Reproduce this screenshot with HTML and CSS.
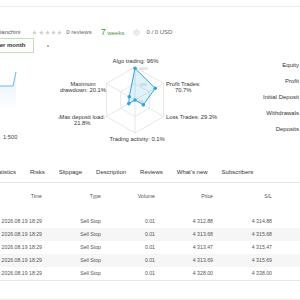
FILE: index.html
```html
<!DOCTYPE html>
<html lang="en">
<head>
  <meta charset="UTF-8">
  <meta name="viewport" content="width=device-width, initial-scale=1.0">
  <title>Signal Bianchini</title>
  <link rel="stylesheet" href="styles.css">
</head>
<body>
  <div class="topbar"></div>

  <div class="author-row">
    <span class="author">Bianchini</span>
    <span class="stars">
      <svg class="star" viewBox="0 0 10 10"><path d="M5 .5 6.3 3.6 9.6 3.9 7.1 6.1 7.9 9.4 5 7.7 2.1 9.4 2.9 6.1.4 3.9 3.7 3.6Z"/></svg>
      <svg class="star" viewBox="0 0 10 10"><path d="M5 .5 6.3 3.6 9.6 3.9 7.1 6.1 7.9 9.4 5 7.7 2.1 9.4 2.9 6.1.4 3.9 3.7 3.6Z"/></svg>
      <svg class="star" viewBox="0 0 10 10"><path d="M5 .5 6.3 3.6 9.6 3.9 7.1 6.1 7.9 9.4 5 7.7 2.1 9.4 2.9 6.1.4 3.9 3.7 3.6Z"/></svg>
      <svg class="star" viewBox="0 0 10 10"><path d="M5 .5 6.3 3.6 9.6 3.9 7.1 6.1 7.9 9.4 5 7.7 2.1 9.4 2.9 6.1.4 3.9 3.7 3.6Z"/></svg>
      <svg class="star" viewBox="0 0 10 10"><path d="M5 .5 6.3 3.6 9.6 3.9 7.1 6.1 7.9 9.4 5 7.7 2.1 9.4 2.9 6.1.4 3.9 3.7 3.6Z"/></svg>
    </span>
    <span class="reviews">0 reviews</span>
    <span class="weeks"><b>7</b> weeks</span>
    <svg class="coin" viewBox="0 0 14 14">
      <circle cx="7" cy="7" r="5.6" fill="none" stroke="#c6c6c6" stroke-width="2" stroke-dasharray="2 1.5"/>
      <circle cx="7" cy="7" r="2.6" fill="none" stroke="#c6c6c6" stroke-width="1.3"/>
    </svg>
    <span class="funds">0 / 0 USD</span>
  </div>

  <div class="plan-row">
    <div class="plan-btn">per month</div>
    <span class="plan-dot"></span>
  </div>

  <div class="overview">
    <div class="growth">
      <svg class="growth-chart" width="58" height="62">
        <defs>
          <linearGradient id="growthFill" x1="0" y1="0" x2="0" y2="1">
            <stop offset="0" stop-color="#5aaee8" stop-opacity="0.16"/>
            <stop offset="1" stop-color="#5aaee8" stop-opacity="0"/>
          </linearGradient>
        </defs>
        <path d="M0 31 L13 31 L16 17 L16 56 L0 56 Z" fill="url(#growthFill)"/>
        <polyline points="0,31 13,31 16,17" fill="none" stroke="#5aaee8" stroke-width="0.9"/>
        <circle cx="59" cy="63" r="0.8" fill="#9a9a9a"/>
      </svg>
      <div class="leverage">1:500</div>
    </div>

    <div class="radar">
      <svg width="162" height="90">
        <g fill="none" stroke="#dcdcdc" stroke-width="0.7">
          <polygon points="77,12 105.58,28.5 105.58,61.5 77,78 48.42,61.5 48.42,28.5"/>
          <polygon points="77,28.5 91.29,36.75 91.29,53.25 77,61.5 62.71,53.25 62.71,36.75"/>
          <line x1="77" y1="45" x2="77" y2="12"/>
          <line x1="77" y1="45" x2="105.58" y2="28.5"/>
          <line x1="77" y1="45" x2="105.58" y2="61.5"/>
          <line x1="77" y1="45" x2="77" y2="78"/>
          <line x1="77" y1="45" x2="48.42" y2="61.5"/>
          <line x1="77" y1="45" x2="48.42" y2="28.5"/>
        </g>
        <g class="radar-scale">
          <text x="81" y="14.5">100%</text>
          <text x="82" y="30.5">50%</text>
          <text x="80" y="47.5">0%</text>
        </g>
        <polygon points="77,13.32 97.21,33.33 85.37,49.83 77,45.03 70.77,48.6 71.26,41.68"
                 fill="rgba(41,168,224,0.15)" stroke="#29a8e0" stroke-width="1"/>
        <g fill="#29a8e0">
          <circle cx="77" cy="13.32" r="1.8"/>
          <circle cx="97.21" cy="33.33" r="1.8"/>
          <circle cx="85.37" cy="49.83" r="1.8"/>
          <circle cx="77" cy="45.03" r="1.8"/>
          <circle cx="70.77" cy="48.6" r="1.8"/>
          <circle cx="71.26" cy="41.68" r="1.8"/>
        </g>
      </svg>
      <div class="radar-label algo">Algo trading: 96%</div>
      <div class="radar-label profit">Profit Trades:<br>70.7%</div>
      <div class="radar-label loss">Loss Trades: 29.3%</div>
      <div class="radar-label activity">Trading activity: 0.1%</div>
      <div class="radar-label maxdep">Max deposit load:<br>21.8%</div>
      <div class="radar-label maxdd">Maximum<br>drawdown: 20.1%</div>
    </div>

    <div class="stats">
      <div>Equity</div>
      <div>Profit</div>
      <div>Initial Deposit</div>
      <div>Withdrawals</div>
      <div>Deposits</div>
    </div>
  </div>

  <nav class="tabs">
    <a href="#" class="tab first">Statistics</a>
    <a href="#" class="tab">Risks</a>
    <a href="#" class="tab">Slippage</a>
    <a href="#" class="tab">Description</a>
    <a href="#" class="tab">Reviews</a>
    <a href="#" class="tab">What's new</a>
    <a href="#" class="tab">Subscribers</a>
  </nav>

  <table class="orders">
    <thead>
      <tr>
        <th class="col-time">Time</th>
        <th class="col-type">Type</th>
        <th class="col-volume">Volume</th>
        <th class="col-price">Price</th>
        <th class="col-sl">S/L</th>
        <th class="col-rest"></th>
      </tr>
    </thead>
    <tbody>
      <tr><td>2026.08.19 18:29</td><td>Sell Stop</td><td>0.01</td><td>4 312.88</td><td>4 314.88</td><td></td></tr>
      <tr><td>2026.08.19 18:29</td><td>Sell Stop</td><td>0.01</td><td>4 313.68</td><td>4 315.68</td><td></td></tr>
      <tr><td>2026.08.19 18:29</td><td>Sell Stop</td><td>0.01</td><td>4 313.47</td><td>4 315.47</td><td></td></tr>
      <tr><td>2026.08.19 18:29</td><td>Sell Stop</td><td>0.01</td><td>4 313.69</td><td>4 315.69</td><td></td></tr>
      <tr><td>2026.08.19 18:29</td><td>Sell Stop</td><td>0.01</td><td>4 328.00</td><td>4 338.00</td><td></td></tr>
    </tbody>
  </table>

  <div class="footer-line"></div>
</body>
</html>
```

FILE: styles.css
```css
* {
  margin: 0;
  padding: 0;
  box-sizing: border-box;
}

body {
  font-family: "Liberation Sans", Arial, sans-serif;
  font-size: 6px;
  color: #333;
  background-color: #fff;
  width: 300px;
  height: 300px;
  overflow: hidden;
}

.topbar {
  height: 7px;
  border-bottom: 1px solid #ececec;
}

/* author line */
.author-row {
  display: flex;
  align-items: center;
  height: 10px;
  margin-top: 20px;
  white-space: nowrap;
}

.author {
  margin-left: -4px;
  color: #555;
}

.stars {
  display: flex;
  gap: 1.25px;
  margin-left: 12px;
}

.star {
  width: 5px;
  height: 5px;
  fill: #cfcfcf;
}

.reviews {
  margin-left: 4px;
  color: #666;
}

.weeks {
  margin-left: 9px;
  color: #4c9a3c;
}

.weeks b {
  font-size: 9px;
  font-weight: normal;
}

.coin {
  width: 7px;
  height: 7px;
  margin-left: 9px;
}

.funds {
  margin-left: 6px;
  color: #666;
}

/* subscription button */
.plan-row {
  display: flex;
  align-items: center;
  margin-top: 1px;
}

.plan-btn {
  height: 15px;
  line-height: 13px;
  margin-left: -13px;
  padding: 0 8px;
  border: 1px solid #c3dfb5;
  font-weight: bold;
  color: #333;
  white-space: nowrap;
}

.plan-dot {
  width: 2px;
  height: 2px;
  margin-left: 13px;
  border-radius: 50%;
  background-color: #999;
}

/* overview: growth, radar, stats */
.overview {
  display: flex;
  height: 90px;
  margin-top: 2px;
}

.growth {
  width: 58px;
  flex-shrink: 0;
}

.growth-chart {
  display: block;
  overflow: visible;
}

.leverage {
  margin-top: 15px;
  padding-left: 3px;
  line-height: 10px;
  font-size: 5.8px;
  color: #444;
}

.radar {
  position: relative;
  width: 162px;
  height: 90px;
  flex-shrink: 0;
}

.radar svg {
  display: block;
}

.radar-scale {
  font-family: "Liberation Sans", Arial, sans-serif;
  font-size: 3.4px;
  fill: #b0b0b0;
}

.radar-label {
  position: absolute;
  font-size: 5.8px;
  line-height: 6.5px;
  color: #333;
  white-space: nowrap;
  text-align: center;
}

.radar-label.algo {
  left: 77.5px;
  top: 2.75px;
  transform: translateX(-50%);
}

.radar-label.profit {
  left: 108px;
  top: 25.5px;
}

.radar-label.loss {
  left: 108px;
  top: 58.75px;
}

.radar-label.activity {
  left: 79px;
  top: 80.75px;
  transform: translateX(-50%);
}

.radar-label.maxdep {
  right: 115px;
  top: 58.75px;
}

.radar-label.maxdd {
  right: 114px;
  top: 25.5px;
}

.stats {
  flex: 1;
  padding-top: 2px;
  padding-right: 1px;
  line-height: 16px;
  text-align: right;
  white-space: nowrap;
  color: #333;
}

/* tabs */
.tabs {
  display: flex;
  gap: 14px;
  margin-top: 22px;
  padding-bottom: 5px;
  line-height: 10px;
  border-bottom: 1px solid #e6e6e6;
  white-space: nowrap;
}

.tab {
  color: #333;
  text-decoration: none;
}

.tab.first {
  margin-left: -8px;
}

/* orders table */
.orders {
  width: 316px;
  margin-left: -16px;
  border-collapse: collapse;
  table-layout: fixed;
  font-size: 5.2px;
  color: #555;
}

.orders th {
  padding: 8px 0 14px;
  line-height: 10px;
  font-weight: normal;
  text-align: right;
}

.orders td {
  padding: 0;
  line-height: 13px;
  text-align: right;
  white-space: nowrap;
}

.orders tbody tr:nth-child(even) {
  background-color: #f6f6f6;
}

.orders tbody tr:last-child td {
  border-bottom: 1px solid #e8e8e8;
}

.col-time { width: 58px; }
.col-type { width: 59px; }
.col-volume { width: 54px; }
.col-price { width: 58px; }
.col-sl { width: 59px; }

.footer-line {
  margin-top: 18px;
  border-top: 1px solid #ececec;
}
```
